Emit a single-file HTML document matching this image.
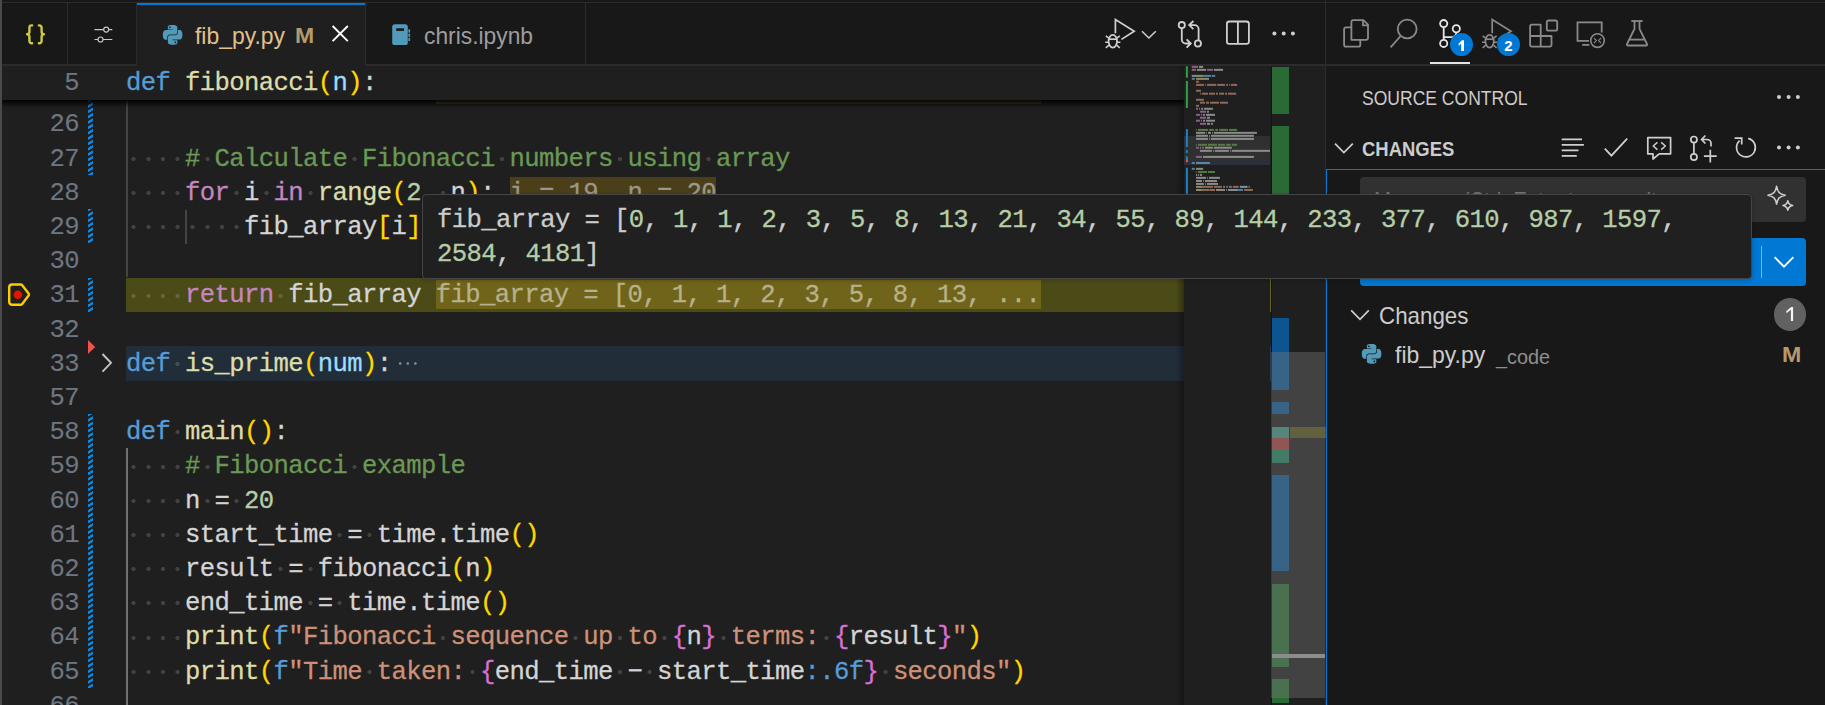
<!DOCTYPE html>
<html><head><meta charset="utf-8"><title>fib_py.py</title>
<style>
*{box-sizing:border-box;margin:0;padding:0}
html,body{width:1825px;height:705px;overflow:hidden;background:#1f1f1f}
body{position:relative;font-family:"Liberation Sans",sans-serif;color:#ccc}
.a{position:absolute}
.mono{font-family:"Liberation Mono",monospace;font-size:25.6px;white-space:pre;letter-spacing:-0.613px;-webkit-text-stroke:0.28px}
.ln{position:absolute;left:0;height:34.2px;line-height:34.2px;white-space:pre}
.num{position:absolute;top:2.0px;left:30px;width:49px;text-align:right;color:#6e7681;-webkit-text-stroke:0.1px}
.code{position:absolute;top:2.0px;left:126px}
i.w{font-style:normal;display:inline-block;position:relative;top:0px;width:14.75px;height:10px;vertical-align:middle;background:radial-gradient(circle at 50% 50%,rgba(227,228,226,.175) 0,rgba(227,228,226,.175) 1.7px,rgba(227,228,226,0) 2.5px)}
.ui{position:absolute;white-space:pre;transform-origin:0 50%}
svg{position:absolute;overflow:visible}
</style></head><body>

<div class="a" style="left:126px;top:278.0px;width:1058px;height:34.2px;background:#4b4b18"></div>
<div class="a" style="left:126px;top:346.0px;width:1058px;height:34.6px;background:#222d3a"></div>
<div class="a" style="left:126px;top:100px;width:1.9px;height:177.4px;background:#444"></div>
<div class="a" style="left:185px;top:209.8px;width:1.9px;height:34.2px;background:#444"></div>
<div class="a" style="left:126px;top:448.4px;width:1.9px;height:256.6px;background:#707070"></div>
<div class="ln mono" style="top:106.4px"><span class="num">26</span><span class="code"></span></div>
<div class="ln mono" style="top:140.6px"><span class="num">27</span><span class="code"><i class="w"> </i><i class="w"> </i><i class="w"> </i><i class="w"> </i><span style="color:#6a9955">#</span><i class="w"> </i><span style="color:#6a9955">Calculate</span><i class="w"> </i><span style="color:#6a9955">Fibonacci</span><i class="w"> </i><span style="color:#6a9955">numbers</span><i class="w"> </i><span style="color:#6a9955">using</span><i class="w"> </i><span style="color:#6a9955">array</span></span></div>
<div class="ln mono" style="top:174.8px"><span class="num">28</span><span class="code"><i class="w"> </i><i class="w"> </i><i class="w"> </i><i class="w"> </i><span style="color:#c586c0">for</span><i class="w"> </i><span style="color:#d4d4d4">i</span><i class="w"> </i><span style="color:#c586c0">in</span><i class="w"> </i><span style="color:#dcdcaa">range</span><span style="color:#ffd700">(</span><span style="color:#b5cea8">2</span><span style="color:#d4d4d4">,</span><i class="w"> </i><span style="color:#d4d4d4">n</span><span style="color:#ffd700">)</span><span style="color:#d4d4d4">:</span></span></div>
<div class="ln mono" style="top:209.0px"><span class="num">29</span><span class="code"><i class="w"> </i><i class="w"> </i><i class="w"> </i><i class="w"> </i><i class="w"> </i><i class="w"> </i><i class="w"> </i><i class="w"> </i><span style="color:#d4d4d4">fib_array</span><span style="color:#ffd700">[</span><span style="color:#d4d4d4">i</span><span style="color:#ffd700">]</span></span></div>
<div class="ln mono" style="top:243.2px"><span class="num">30</span><span class="code"></span></div>
<div class="ln mono" style="top:277.4px"><span class="num">31</span><span class="code"><i class="w"> </i><i class="w"> </i><i class="w"> </i><i class="w"> </i><span style="color:#c586c0">return</span><i class="w"> </i><span style="color:#d4d4d4">fib_array</span></span></div>
<div class="ln mono" style="top:311.6px"><span class="num">32</span><span class="code"></span></div>
<div class="ln mono" style="top:345.8px"><span class="num">33</span><span class="code"><span style="color:#569cd6">def</span><i class="w"> </i><span style="color:#dcdcaa">is_prime</span><span style="color:#ffd700">(</span><span style="color:#9cdcfe">num</span><span style="color:#ffd700">)</span><span style="color:#d4d4d4">:</span></span></div>
<div class="ln mono" style="top:380.0px"><span class="num">57</span><span class="code"></span></div>
<div class="ln mono" style="top:414.2px"><span class="num">58</span><span class="code"><span style="color:#569cd6">def</span><i class="w"> </i><span style="color:#dcdcaa">main</span><span style="color:#ffd700">()</span><span style="color:#d4d4d4">:</span></span></div>
<div class="ln mono" style="top:448.4px"><span class="num">59</span><span class="code"><i class="w"> </i><i class="w"> </i><i class="w"> </i><i class="w"> </i><span style="color:#6a9955">#</span><i class="w"> </i><span style="color:#6a9955">Fibonacci</span><i class="w"> </i><span style="color:#6a9955">example</span></span></div>
<div class="ln mono" style="top:482.6px"><span class="num">60</span><span class="code"><i class="w"> </i><i class="w"> </i><i class="w"> </i><i class="w"> </i><span style="color:#d4d4d4">n</span><i class="w"> </i><span style="color:#d4d4d4">=</span><i class="w"> </i><span style="color:#b5cea8">20</span></span></div>
<div class="ln mono" style="top:516.8px"><span class="num">61</span><span class="code"><i class="w"> </i><i class="w"> </i><i class="w"> </i><i class="w"> </i><span style="color:#d4d4d4">start_time</span><i class="w"> </i><span style="color:#d4d4d4">=</span><i class="w"> </i><span style="color:#d4d4d4">time.time</span><span style="color:#ffd700">()</span></span></div>
<div class="ln mono" style="top:551.0px"><span class="num">62</span><span class="code"><i class="w"> </i><i class="w"> </i><i class="w"> </i><i class="w"> </i><span style="color:#d4d4d4">result</span><i class="w"> </i><span style="color:#d4d4d4">=</span><i class="w"> </i><span style="color:#d4d4d4">fibonacci</span><span style="color:#ffd700">(</span><span style="color:#d4d4d4">n</span><span style="color:#ffd700">)</span></span></div>
<div class="ln mono" style="top:585.2px"><span class="num">63</span><span class="code"><i class="w"> </i><i class="w"> </i><i class="w"> </i><i class="w"> </i><span style="color:#d4d4d4">end_time</span><i class="w"> </i><span style="color:#d4d4d4">=</span><i class="w"> </i><span style="color:#d4d4d4">time.time</span><span style="color:#ffd700">()</span></span></div>
<div class="ln mono" style="top:619.4px"><span class="num">64</span><span class="code"><i class="w"> </i><i class="w"> </i><i class="w"> </i><i class="w"> </i><span style="color:#dcdcaa">print</span><span style="color:#ffd700">(</span><span style="color:#569cd6">f</span><span style="color:#ce9178">"Fibonacci</span><i class="w"> </i><span style="color:#ce9178">sequence</span><i class="w"> </i><span style="color:#ce9178">up</span><i class="w"> </i><span style="color:#ce9178">to</span><i class="w"> </i><span style="color:#da70d6">{</span><span style="color:#d4d4d4">n</span><span style="color:#da70d6">}</span><i class="w"> </i><span style="color:#ce9178">terms:</span><i class="w"> </i><span style="color:#da70d6">{</span><span style="color:#d4d4d4">result</span><span style="color:#da70d6">}</span><span style="color:#ce9178">"</span><span style="color:#ffd700">)</span></span></div>
<div class="ln mono" style="top:653.6px"><span class="num">65</span><span class="code"><i class="w"> </i><i class="w"> </i><i class="w"> </i><i class="w"> </i><span style="color:#dcdcaa">print</span><span style="color:#ffd700">(</span><span style="color:#569cd6">f</span><span style="color:#ce9178">"Time</span><i class="w"> </i><span style="color:#ce9178">taken:</span><i class="w"> </i><span style="color:#da70d6">{</span><span style="color:#d4d4d4">end_time</span><i class="w"> </i><span style="color:#d4d4d4">−</span><i class="w"> </i><span style="color:#d4d4d4">start_time</span><span style="color:#569cd6">:.6f</span><span style="color:#da70d6">}</span><i class="w"> </i><span style="color:#ce9178">seconds"</span><span style="color:#ffd700">)</span></span></div>
<div class="ln mono" style="top:687.8px"><span class="num">66</span><span class="code"></span></div>
<div class="a" style="left:509.50px;top:177.2px;width:206.50px;height:29.4px;background:#4b3f1a"></div>
<div class="ln mono" style="top:174.8px"><span class="code" style="left:509.50px;color:#9c9788">i = 19, n = 20</span></div>
<div class="a" style="left:435.75px;top:279.8px;width:604.75px;height:29.4px;background:#6f6419"></div>
<div class="ln mono" style="top:277.4px"><span class="code" style="left:435.75px;color:#b7b18c">fib_array = [0, 1, 1, 2, 3, 5, 8, 13, ...</span></div>
<svg style="left:0;top:0" width="1825" height="705" viewBox="0 0 1825 705"><g fill="#8d949e"><circle cx="400.2" cy="363.6" r="1.25"/><circle cx="407.8" cy="363.6" r="1.25"/><circle cx="415.4" cy="363.6" r="1.25"/></g></svg>
<div class="a" style="left:88px;top:100.0px;width:5px;height:74.8px;background:repeating-linear-gradient(150deg,#0f86de 0,#0f86de 1.9px,rgba(15,134,222,0) 2.5px,rgba(15,134,222,0) 4.1px,#0f86de 4.63px)"></div>
<div class="a" style="left:88px;top:209.0px;width:5px;height:34.2px;background:repeating-linear-gradient(150deg,#0f86de 0,#0f86de 1.9px,rgba(15,134,222,0) 2.5px,rgba(15,134,222,0) 4.1px,#0f86de 4.63px)"></div>
<div class="a" style="left:88px;top:277.8px;width:5px;height:34.2px;background:repeating-linear-gradient(150deg,#0f86de 0,#0f86de 1.9px,rgba(15,134,222,0) 2.5px,rgba(15,134,222,0) 4.1px,#0f86de 4.63px)"></div>
<div class="a" style="left:88px;top:414.2px;width:5px;height:273.6px;background:repeating-linear-gradient(150deg,#0f86de 0,#0f86de 1.9px,rgba(15,134,222,0) 2.5px,rgba(15,134,222,0) 4.1px,#0f86de 4.63px)"></div>
<svg style="left:88px;top:340px" width="8" height="14" viewBox="0 0 8 14"><path d="M0 0 L7.2 7 L0 14 Z" fill="#f0524f"/></svg>
<svg style="left:98px;top:349px" width="18" height="28" viewBox="0 0 18 28"><path d="M4.5 5 L13 13.8 L4.5 22.6" fill="none" stroke="#c5c5c5" stroke-width="1.9"/></svg>
<svg style="left:5px;top:280px" width="30" height="30" viewBox="0 0 30 30"><path d="M7 4.500 H15.6 Q16.600 4.500 17.2 5.300 L23.6 13.6 Q24.4 14.6 23.6 15.6 L17.2 23.900 Q16.600 24.700 15.6 24.700 H7 A2.800 2.800 0 0 1 4.200 21.900 V7.300 A2.800 2.800 0 0 1 7 4.500 Z" fill="none" stroke="#ffcc00" stroke-width="2.4" stroke-linejoin="round"/><circle cx="12.9" cy="14.7" r="4.3" fill="#e51400"/></svg>
<div class="a" style="left:436px;top:100px;width:605px;height:4px;background:#4b3f1a"></div>
<div class="a" style="left:2px;top:66px;width:1182px;height:34px;background:#1f1f1f;box-shadow:0 3px 5px 1px rgba(0,0,0,.9)"></div>
<div class="a" style="left:2px;top:66px;width:1182px;height:34px;background:#1f1f1f"></div>
<div class="ln mono" style="top:65.4px"><span class="num">5</span><span class="code"><span style="color:#569cd6">def</span><span style="color:#d4d4d4"> </span><span style="color:#dcdcaa">fibonacci</span><span style="color:#ffd700">(</span><span style="color:#9cdcfe">n</span><span style="color:#ffd700">)</span><span style="color:#d4d4d4">:</span></span></div>
<div class="a" style="left:0;top:0;width:1326px;height:66px;background:#181818"></div>
<div class="a" style="left:1326px;top:0;width:499px;height:705px;background:#181818"></div>
<div class="a" style="left:0;top:2px;width:1825px;height:1px;background:#2b2b2b"></div>
<div class="a" style="left:0;top:64.3px;width:1825px;height:1.7px;background:#2b2b2b"></div>
<div class="a" style="left:137.2px;top:3px;width:227.6px;height:63px;background:#1f1f1f;border-top:2px solid #0078d4"></div>
<div class="a" style="left:66.8px;top:3px;width:1.5px;height:62px;background:#2b2b2b"></div>
<div class="a" style="left:135.7px;top:3px;width:1.5px;height:62px;background:#2b2b2b"></div>
<div class="a" style="left:364.8px;top:3px;width:1.5px;height:62px;background:#2b2b2b"></div>
<div class="a" style="left:584.8px;top:3px;width:1.5px;height:62px;background:#2b2b2b"></div>
<div class="a" style="left:1324.6px;top:0;width:1.7px;height:705px;background:#2b2b2b"></div>
<div class="a" style="left:0;top:0;width:2px;height:705px;background:#4a4a4a"></div>
<svg style="left:0;top:0" width="1825" height="705" viewBox="0 0 1825 705"><g fill="none" stroke="#cbcb41" stroke-width="2.4" stroke-linecap="round" stroke-linejoin="round"><path d="M32.1 25.4h-.5a2.2 2.2 0 0 0-2.2 2.2v4.2a2.5 2.5 0 0 1-2.3 2.5a2.5 2.5 0 0 1 2.3 2.5v4.2a2.2 2.2 0 0 0 2.2 2.2h.5"/><path d="M38.9 25.4h.5a2.2 2.2 0 0 1 2.2 2.2v4.2a2.5 2.5 0 0 0 2.3 2.5a2.5 2.5 0 0 0-2.3 2.5v4.2a2.2 2.2 0 0 1-2.2 2.2h-.5"/></g></svg>
<svg style="left:0;top:0" width="1825" height="705" viewBox="0 0 1825 705"><g fill="#181818" stroke="#c8c8c8" stroke-width="1.2"><path d="M94.5 29.6H112.3M94.5 39.5H112.3"/><circle cx="106.2" cy="29.6" r="2.5"/><circle cx="100.5" cy="39.5" r="2.5"/></g></svg>
<svg style="left:162.7px;top:24.5px" width="19.2" height="19.7" viewBox="0.2 0.1 23.6 23.8" preserveAspectRatio="none"><path d="M14.25.18l.9.2.73.26.59.3.45.32.34.34.25.34.16.33.1.3.04.26.02.2-.01.13V8.5l-.05.63-.13.55-.21.46-.26.38-.3.31-.33.25-.35.19-.35.14-.33.1-.3.07-.26.04-.21.02H8.77l-.69.05-.59.14-.5.22-.41.27-.33.32-.27.35-.2.36-.15.37-.1.35-.07.32-.04.27-.02.21v3.06H3.17l-.21-.03-.28-.07-.32-.12-.35-.18-.36-.26-.36-.36-.35-.46-.32-.59-.28-.73-.21-.88-.14-1.05-.05-1.23.06-1.22.16-1.04.24-.87.32-.71.36-.57.4-.44.42-.33.42-.24.4-.16.36-.1.32-.05.24-.01h.16l.06.01h8.16v-.83H6.18l-.01-2.75-.02-.37.05-.34.11-.31.17-.28.25-.26.31-.23.38-.2.44-.18.51-.15.58-.12.64-.1.71-.06.77-.04.84-.02 1.27.05zm-6.3 1.98l-.23.33-.08.41.08.41.23.34.33.22.41.09.41-.09.33-.22.23-.34.08-.41-.08-.41-.23-.33-.33-.22-.41-.09-.41.09zm13.09 3.95l.28.06.32.12.35.18.36.27.36.35.35.47.32.59.28.73.21.88.14 1.04.05 1.23-.06 1.23-.16 1.04-.24.86-.32.71-.36.57-.4.45-.42.33-.42.24-.4.16-.36.09-.32.05-.24.02-.16-.01h-8.22v.82h5.84l.01 2.76.02.36-.05.34-.11.31-.17.29-.25.25-.31.24-.38.2-.44.17-.51.15-.58.13-.64.09-.71.07-.77.04-.84.01-1.27-.04-1.07-.14-.9-.2-.73-.25-.59-.3-.45-.33-.34-.34-.25-.34-.16-.33-.1-.3-.04-.25-.02-.2.01-.13v-5.34l.05-.64.13-.54.21-.46.26-.38.3-.32.33-.24.35-.2.35-.14.33-.1.3-.06.26-.04.21-.02.13-.01h5.84l.69-.05.59-.14.5-.21.41-.28.33-.32.27-.35.2-.36.15-.36.1-.35.07-.32.04-.28.02-.21V6.07h2.09l.14.01zm-6.47 14.25l-.23.33-.08.41.08.41.23.33.33.23.41.08.41-.08.33-.23.23-.33.08-.41-.08-.41-.23-.33-.33-.23-.41-.08-.41.08z" fill="#519aba"/></svg>
<div class="ui" style="left:195px;top:21.5px;font-size:23.4px;line-height:28px;color:#e2c08d;transform:scaleX(.98)">fib_py.py</div>
<div class="ui" style="left:294.9px;top:22.4px;font-size:22.6px;line-height:28px;color:#b39a71;font-weight:bold;transform:scaleX(1.02)">M</div>
<svg style="left:0;top:0" width="1825" height="705" viewBox="0 0 1825 705"><path d="M332.6 26 L347.8 41.2 M347.8 26 L332.6 41.2" stroke="#fff" stroke-width="1.9" fill="none"/></svg>
<svg style="left:0;top:0" width="1825" height="705" viewBox="0 0 1825 705"><rect x="392.2" y="24.2" width="15.6" height="20.8" rx="2.6" fill="#519aba"/><rect x="396.2" y="28.3" width="7.9" height="2.6" fill="#181818"/><rect x="408.4" y="29.4" width="1.7" height="3.2" fill="#519aba"/><rect x="408.4" y="33.6" width="1.7" height="3.2" fill="#519aba"/><rect x="408.4" y="37.8" width="1.7" height="3.2" fill="#519aba"/></svg>
<div class="ui" style="left:423.6px;top:21.5px;font-size:23.4px;line-height:28px;color:#9d9d9d;transform:scaleX(.975)">chris.ipynb</div>
<svg style="left:0;top:0" width="1825" height="705" viewBox="0 0 1825 705"><g transform="translate(0 0)" fill="none" stroke="#d0d0d0" stroke-width="1.7" stroke-linejoin="miter"><path d="M1115.4 33.2V19.6L1134.2 31.2L1121.4 39.4"/><ellipse cx="1112.8" cy="41.2" rx="4.2" ry="6.4"/><path d="M1108.6 39.2H1117" /><path d="M1105.8 35.800L1108.8 38.2M1119.800 35.800L1116.800 38.2M1105.2 42.2H1108.4M1117.2 42.2H1120.4M1105.8 47.800L1109 45.2M1119.800 47.800L1116.600 45.2" stroke-width="1.5"/></g><path d="M1142 31.2L1148.9 38L1155.8 31.2" fill="none" stroke="#d0d0d0" stroke-width="1.5"/><g fill="none" stroke="#d0d0d0" stroke-width="1.8"><circle cx="1181.8" cy="25.1" r="3.1"/><circle cx="1197.9" cy="43.5" r="3.1"/><path d="M1181.8 28.3V39.5a4 4 0 0 0 4 4H1190.4M1186.6 39.4L1190.8 43.5L1186.6 47.6"/><path d="M1198.6 40.3V29.1a4 4 0 0 0-4-4H1189.6M1193.4 21L1189.2 25.1L1193.4 29.2"/></g><g fill="none" stroke="#d0d0d0" stroke-width="1.8"><rect x="1226.9" y="21.5" width="22" height="22.4" rx="2.4"/><path d="M1237.9 21.5V43.9"/></g><g fill="#d0d0d0"><circle cx="1274.4" cy="33.6" r="2"/><circle cx="1283.7" cy="33.6" r="2"/><circle cx="1292.9" cy="33.6" r="2"/></g></svg>
<svg style="left:0;top:0" width="1825" height="705" viewBox="0 0 1825 705"><g fill="none" stroke="#8a8a8a" stroke-width="1.8" stroke-linejoin="round"><path d="M1351.4 39.8V22.1a2 2 0 0 1 2-2H1363.4L1368 24.7V37.8a2 2 0 0 1-2 2Z"/><path d="M1363 20.4V25.4H1367.8"/><path d="M1351.2 27.4H1346.1a2 2 0 0 0-2 2V44.7a2 2 0 0 0 2 2H1358.3a2 2 0 0 0 2-2V40"/></g><g fill="none" stroke="#8a8a8a" stroke-width="1.8"><circle cx="1407.2" cy="29" r="9.4"/><path d="M1400.6 36L1390.6 47.4"/></g><g fill="none" stroke="#e6e6e6" stroke-width="1.8"><circle cx="1443.7" cy="23.6" r="3.6"/><circle cx="1443.7" cy="43.4" r="3.6"/><circle cx="1456.3" cy="28.8" r="3.6"/><path d="M1443.7 27.2V39.8M1456.3 32.4c0 3.6-2.600 4.800-6 4.800H1443.7"/></g><g transform="translate(376.8 0)" fill="none" stroke="#8a8a8a" stroke-width="1.7" stroke-linejoin="miter"><path d="M1115.4 33.2V19.6L1134.2 31.2L1121.4 39.4"/><ellipse cx="1112.8" cy="41.2" rx="4.2" ry="6.4"/><path d="M1108.6 39.2H1117" /><path d="M1105.8 35.800L1108.8 38.2M1119.800 35.800L1116.800 38.2M1105.2 42.2H1108.4M1117.2 42.2H1120.4M1105.8 47.800L1109 45.2M1119.800 47.800L1116.600 45.2" stroke-width="1.5"/></g><g fill="none" stroke="#8a8a8a" stroke-width="1.8" stroke-linejoin="round"><path d="M1530.1 26.5a1.8 1.8 0 0 1 1.8-1.8H1540.7V36H1551.5V44.8a1.8 1.8 0 0 1-1.8 1.8H1531.9a1.8 1.8 0 0 1-1.8-1.8Z"/><path d="M1540.7 36V46.6M1530.1 36H1540.7"/><rect x="1546.8" y="20.5" width="10.4" height="10.2" rx="1.8"/></g><g fill="none" stroke="#8a8a8a" stroke-width="1.8"><path d="M1589 40.9H1577.5V22.4H1601.7V32.6"/><path d="M1582.3 44.9H1589.4"/><circle cx="1597.5" cy="40.6" r="6.8" stroke-width="1.6"/><path d="M1594 38.2L1596.4 40.6L1594 43M1601 38.2L1598.6 40.6L1601 43" stroke-width="1.1"/></g><g fill="none" stroke="#8a8a8a" stroke-width="1.8" stroke-linejoin="round"><path d="M1631.3 21H1642.7"/><path d="M1634.5 21V28.8L1627 44a1 1 0 0 0 .9 1.5H1646.1a1 1 0 0 0 .9-1.5L1639.5 28.8V21"/><path d="M1629.6 39.6H1644.4"/></g></svg>
<div class="a" style="left:1449.8px;top:33.1px;width:23px;height:23px;border-radius:50%;background:#0078d4"></div>
<svg style="left:0;top:0" width="1825" height="705" viewBox="0 0 1825 705"><path d="M1458.7 43.6L1461.8999999999999 40.2H1464.0V50.9H1461.2V43.5L1458.7 46.0Z" fill="#fff"/></svg>
<div class="a" style="left:1496.9px;top:33.3px;width:23px;height:23px;border-radius:50%;background:#0078d4"></div>
<div class="ui" style="left:1496.9px;top:34.4px;width:23px;text-align:center;font-size:15px;line-height:23px;font-weight:bold;color:#fff">2</div>
<div class="a" style="left:1430px;top:62.4px;width:40px;height:1.6px;background:#e4e4e4"></div>
<div class="a" style="left:1176px;top:100px;width:8px;height:605px;background:linear-gradient(90deg,rgba(0,0,0,0),rgba(0,0,0,.35))"></div>
<div class="a" style="left:1176px;top:66px;width:8px;height:34px;background:linear-gradient(90deg,rgba(0,0,0,0),rgba(0,0,0,.2))"></div>
<div class="a" style="left:1184px;top:66px;width:87px;height:639px;background:#1f1f1f"></div>
<div class="a" style="left:1184px;top:136px;width:86px;height:29.4px;background:rgba(121,121,121,.2)"></div>
<svg style="left:0;top:0" width="1825" height="705" viewBox="0 0 1825 705"><rect x="1184" y="161.6" width="86" height="3" fill="#263243"/><rect x="1191.74" y="65.89" width="6.26" height="2" fill="#8a5f88"/><rect x="1198.98" y="65.89" width="4.11" height="2" fill="#8b8b8b"/><rect x="1191.74" y="68.83" width="4.31" height="2" fill="#8a5f88"/><rect x="1197.03" y="68.83" width="9.00" height="2" fill="#8b8b8b"/><rect x="1207.01" y="68.83" width="5.87" height="2" fill="#8a5f88"/><rect x="1213.86" y="68.83" width="9.20" height="2" fill="#8b8b8b"/><rect x="1191.74" y="74.89" width="11.35" height="2" fill="#8d8d6e"/><rect x="1203.09" y="74.89" width="8.22" height="2" fill="#4f7fa6"/><rect x="1211.90" y="74.89" width="3.33" height="2" fill="#4f7fa6"/><rect x="1191.74" y="77.83" width="3.13" height="2" fill="#4f7fa6"/><rect x="1196.05" y="77.83" width="12.92" height="2" fill="#8d8d6e"/><rect x="1196.05" y="80.77" width="2.94" height="2" fill="#8f6a57"/><rect x="1196.05" y="83.90" width="7.83" height="2" fill="#8f6a57"/><rect x="1204.85" y="83.90" width="0.78" height="2" fill="#8f6a57"/><rect x="1207.01" y="83.90" width="9.20" height="2" fill="#8f6a57"/><rect x="1217.18" y="83.90" width="7.83" height="2" fill="#8f6a57"/><rect x="1226.18" y="83.90" width="1.76" height="2" fill="#8f6a57"/><rect x="1229.12" y="83.90" width="0.78" height="2" fill="#8f6a57"/><rect x="1230.88" y="83.90" width="6.26" height="2" fill="#8f6a57"/><rect x="1196.05" y="89.77" width="4.89" height="2" fill="#8f6a57"/><rect x="1199.96" y="92.70" width="0.78" height="2" fill="#8f6a57"/><rect x="1201.92" y="92.70" width="6.07" height="2" fill="#8f6a57"/><rect x="1208.96" y="92.70" width="6.07" height="2" fill="#8f6a57"/><rect x="1216.01" y="92.70" width="1.96" height="2" fill="#8f6a57"/><rect x="1219.14" y="92.70" width="4.89" height="2" fill="#8f6a57"/><rect x="1225.01" y="92.70" width="1.96" height="2" fill="#8f6a57"/><rect x="1227.95" y="92.70" width="8.22" height="2" fill="#8f6a57"/><rect x="1196.05" y="98.77" width="7.83" height="2" fill="#8f6a57"/><rect x="1199.96" y="101.70" width="5.09" height="2" fill="#8f6a57"/><rect x="1206.03" y="101.70" width="2.94" height="2" fill="#8f6a57"/><rect x="1209.94" y="101.70" width="9.00" height="2" fill="#8f6a57"/><rect x="1219.92" y="101.70" width="8.02" height="2" fill="#8f6a57"/><rect x="1196.05" y="104.84" width="2.94" height="2" fill="#8f6a57"/><rect x="1196.05" y="107.77" width="1.96" height="2" fill="#8a5f88"/><rect x="1198.98" y="107.77" width="0.78" height="2" fill="#8b8b8b"/><rect x="1201.14" y="107.77" width="1.96" height="2" fill="#8b8b8b"/><rect x="1204.07" y="107.77" width="8.81" height="2" fill="#8b8b8b"/><rect x="1199.96" y="110.71" width="6.07" height="2" fill="#8a5f88"/><rect x="1207.01" y="110.71" width="1.96" height="2" fill="#8b8b8b"/><rect x="1196.05" y="113.84" width="3.91" height="2" fill="#8a5f88"/><rect x="1200.94" y="113.84" width="0.78" height="2" fill="#8b8b8b"/><rect x="1203.09" y="113.84" width="1.96" height="2" fill="#8b8b8b"/><rect x="1206.03" y="113.84" width="9.00" height="2" fill="#8b8b8b"/><rect x="1199.96" y="116.77" width="6.07" height="2" fill="#8a5f88"/><rect x="1207.01" y="116.77" width="2.94" height="2" fill="#8b8b8b"/><rect x="1196.05" y="119.71" width="3.91" height="2" fill="#8a5f88"/><rect x="1200.94" y="119.71" width="0.78" height="2" fill="#8b8b8b"/><rect x="1203.09" y="119.71" width="1.96" height="2" fill="#8b8b8b"/><rect x="1206.03" y="119.71" width="9.00" height="2" fill="#8b8b8b"/><rect x="1199.96" y="122.84" width="6.07" height="2" fill="#8a5f88"/><rect x="1207.01" y="122.84" width="2.94" height="2" fill="#8b8b8b"/><rect x="1210.92" y="122.84" width="1.96" height="2" fill="#8b8b8b"/><rect x="1195.85" y="128.91" width="0.78" height="2" fill="#57794a"/><rect x="1198.00" y="128.91" width="9.98" height="2" fill="#57794a"/><rect x="1208.96" y="128.91" width="4.89" height="2" fill="#57794a"/><rect x="1215.23" y="128.91" width="2.74" height="2" fill="#57794a"/><rect x="1219.14" y="128.91" width="8.81" height="2" fill="#57794a"/><rect x="1228.92" y="128.91" width="8.22" height="2" fill="#57794a"/><rect x="1196.05" y="131.84" width="9.00" height="2" fill="#8b8b8b"/><rect x="1205.83" y="131.84" width="0.78" height="2" fill="#8b8b8b"/><rect x="1207.98" y="131.84" width="2.94" height="2" fill="#8b8b8b"/><rect x="1212.09" y="131.84" width="0.78" height="2" fill="#8b8b8b"/><rect x="1213.86" y="131.84" width="43.05" height="2" fill="#8b8b8b"/><rect x="1196.05" y="134.78" width="11.94" height="2" fill="#8b8b8b"/><rect x="1209.16" y="134.78" width="0.78" height="2" fill="#8b8b8b"/><rect x="1210.92" y="134.78" width="43.05" height="2" fill="#8b8b8b"/><rect x="1196.05" y="137.91" width="11.94" height="2" fill="#8b8b8b"/><rect x="1209.16" y="137.91" width="0.78" height="2" fill="#8b8b8b"/><rect x="1210.92" y="137.91" width="43.05" height="2" fill="#8b8b8b"/><rect x="1195.85" y="143.78" width="0.78" height="2" fill="#57794a"/><rect x="1198.00" y="143.78" width="9.00" height="2" fill="#57794a"/><rect x="1207.98" y="143.78" width="9.00" height="2" fill="#57794a"/><rect x="1217.96" y="143.78" width="7.05" height="2" fill="#57794a"/><rect x="1225.99" y="143.78" width="4.89" height="2" fill="#57794a"/><rect x="1231.86" y="143.78" width="5.28" height="2" fill="#57794a"/><rect x="1196.05" y="146.71" width="2.94" height="2" fill="#8a5f88"/><rect x="1199.96" y="146.71" width="0.78" height="2" fill="#8b8b8b"/><rect x="1202.11" y="146.71" width="1.76" height="2" fill="#8a5f88"/><rect x="1205.05" y="146.71" width="7.83" height="2" fill="#8d8d6e"/><rect x="1213.86" y="146.71" width="18.00" height="2" fill="#8b8b8b"/><rect x="1199.96" y="149.85" width="11.94" height="2" fill="#8b8b8b"/><rect x="1213.07" y="149.85" width="0.78" height="2" fill="#8b8b8b"/><rect x="1214.83" y="149.85" width="14.09" height="2" fill="#8b8b8b"/><rect x="1230.10" y="149.85" width="0.78" height="2" fill="#8b8b8b"/><rect x="1231.86" y="149.85" width="38.16" height="2" fill="#8b8b8b"/><rect x="1196.05" y="155.91" width="5.87" height="2" fill="#8a5f88"/><rect x="1203.09" y="155.91" width="50.88" height="2" fill="#8b8b8b"/><rect x="1191.74" y="161.98" width="3.13" height="2" fill="#4f7fa6"/><rect x="1196.05" y="161.98" width="13.89" height="2" fill="#5d88a8"/><rect x="1191.74" y="167.85" width="3.13" height="2" fill="#4f7fa6"/><rect x="1196.05" y="167.85" width="7.05" height="2" fill="#8d8d6e"/><rect x="1195.85" y="170.98" width="0.78" height="2" fill="#57794a"/><rect x="1198.00" y="170.98" width="9.00" height="2" fill="#57794a"/><rect x="1207.98" y="170.98" width="7.05" height="2" fill="#57794a"/><rect x="1196.05" y="173.92" width="0.98" height="2" fill="#8b8b8b"/><rect x="1198.00" y="173.92" width="0.98" height="2" fill="#8b8b8b"/><rect x="1199.96" y="173.92" width="1.96" height="2" fill="#8b8b8b"/><rect x="1196.05" y="176.85" width="9.98" height="2" fill="#8b8b8b"/><rect x="1207.20" y="176.85" width="0.78" height="2" fill="#8b8b8b"/><rect x="1208.96" y="176.85" width="10.96" height="2" fill="#8b8b8b"/><rect x="1196.05" y="179.98" width="5.87" height="2" fill="#8b8b8b"/><rect x="1203.29" y="179.98" width="0.78" height="2" fill="#8b8b8b"/><rect x="1205.05" y="179.98" width="11.94" height="2" fill="#8b8b8b"/><rect x="1196.05" y="182.92" width="7.83" height="2" fill="#8b8b8b"/><rect x="1205.24" y="182.92" width="0.78" height="2" fill="#8b8b8b"/><rect x="1207.01" y="182.92" width="10.96" height="2" fill="#8b8b8b"/><rect x="1196.05" y="185.85" width="5.87" height="2" fill="#8d8d6e"/><rect x="1201.92" y="185.85" width="10.96" height="2" fill="#8f6a57"/><rect x="1213.86" y="185.85" width="8.02" height="2" fill="#8f6a57"/><rect x="1223.05" y="185.85" width="1.96" height="2" fill="#8f6a57"/><rect x="1226.18" y="185.85" width="1.76" height="2" fill="#8f6a57"/><rect x="1228.92" y="185.85" width="2.94" height="2" fill="#4f7fa6"/><rect x="1232.84" y="185.85" width="5.87" height="2" fill="#8f6a57"/><rect x="1239.88" y="185.85" width="7.63" height="2" fill="#7f93a3"/><rect x="1248.49" y="185.85" width="1.37" height="2" fill="#8f6a57"/><rect x="1196.05" y="188.98" width="5.87" height="2" fill="#8d8d6e"/><rect x="1201.92" y="188.98" width="7.05" height="2" fill="#8f6a57"/><rect x="1209.35" y="188.98" width="5.68" height="2" fill="#8f6a57"/><rect x="1216.01" y="188.98" width="9.00" height="2" fill="#8b8b8b"/><rect x="1225.99" y="188.98" width="0.78" height="2" fill="#8b8b8b"/><rect x="1227.95" y="188.98" width="9.98" height="2" fill="#8b8b8b"/><rect x="1237.93" y="188.98" width="5.09" height="2" fill="#4f7fa6"/><rect x="1244.19" y="188.98" width="8.61" height="2" fill="#8f6a57"/><rect x="1185.9" y="66.31" width="2" height="11.35" fill="#2ea043"/><rect x="1185.9" y="80.98" width="2" height="27.01" fill="#2ea043"/><rect x="1185.9" y="129.12" width="2" height="18.00" fill="#1b81c8"/><rect x="1185.9" y="150.06" width="2" height="2.94" fill="#1b81c8"/><rect x="1185.9" y="156.32" width="2" height="2.94" fill="#1b81c8"/><rect x="1185.9" y="159.26" width="2" height="2.94" fill="#e05a4f"/><rect x="1185.9" y="167.68" width="2" height="27.40" fill="#1b81c8"/></svg>
<div class="a" style="left:1271px;top:66px;width:1px;height:639px;background:#131313"></div>
<div class="a" style="left:1272px;top:66.6px;width:17.4px;height:47.2px;background:#2a6b35"></div>
<div class="a" style="left:1272px;top:126px;width:17.4px;height:74.0px;background:#2a6b35"></div>
<div class="a" style="left:1272px;top:318px;width:17.4px;height:72.0px;background:#0d5590"></div>
<div class="a" style="left:1272px;top:402px;width:17.4px;height:12.0px;background:#0d5590"></div>
<div class="a" style="left:1272px;top:426.6px;width:17.4px;height:11.8px;background:#3c8f82"></div>
<div class="a" style="left:1272px;top:438.4px;width:17.4px;height:11.9px;background:#a0403c"></div>
<div class="a" style="left:1272px;top:450.3px;width:17.4px;height:13.1px;background:#1f7d5a"></div>
<div class="a" style="left:1272px;top:475px;width:17.4px;height:96.4px;background:#0d5590"></div>
<div class="a" style="left:1272px;top:583.9px;width:17.4px;height:83.6px;background:#2a6b35"></div>
<div class="a" style="left:1272px;top:679.3px;width:17.4px;height:24.2px;background:#2a6b35"></div>
<div class="a" style="left:1290px;top:426.6px;width:36px;height:11.8px;background:#55511c"></div>
<div class="a" style="left:1270px;top:278px;width:1px;height:33.5px;background:#6a641c"></div>
<div class="a" style="left:1270px;top:346px;width:1px;height:34.6px;background:#2b3a4f"></div>
<div class="a" style="left:1271px;top:352px;width:54px;height:345.7px;background:rgba(121,121,121,.4)"></div>
<div class="a" style="left:1272px;top:654.4px;width:53px;height:3.2px;background:#8c8c8c"></div>
<div class="ui" style="left:1362px;top:86px;font-size:19.8px;line-height:24px;color:#ccc;transform:scaleX(.886)">SOURCE CONTROL</div>
<div class="ui" style="left:1361.6px;top:136.6px;font-size:19.8px;line-height:24px;font-weight:bold;color:#ccc;transform:scaleX(.933)">CHANGES</div>
<svg style="left:0;top:0" width="1825" height="705" viewBox="0 0 1825 705"><g fill="#cfcfcf"><circle cx="1779" cy="97" r="2"/><circle cx="1788.6" cy="97" r="2"/><circle cx="1797.9" cy="97" r="2"/></g><path d="M1335 143.6L1343.9 152.6L1352.8 143.6" fill="none" stroke="#cfcfcf" stroke-width="1.7"/><path d="M1561.7 139.3H1582M1561.7 144.8H1583.9M1561.7 150.3H1578.5M1561.7 155.8H1576.8" fill="none" stroke="#cfcfcf" stroke-width="1.8"/><path d="M1604.8 148.6L1611.4 155.6L1627.2 138.6" fill="none" stroke="#cfcfcf" stroke-width="1.8"/><g fill="none" stroke="#cfcfcf" stroke-width="1.7" stroke-linejoin="round"><path d="M1647.8 137.6H1670.6V153.8H1659.2L1653 159V153.8H1647.8Z"/><path d="M1657.4 142.4L1653.2 146L1657.4 149.6M1661.2 142.4L1665.4 146L1661.2 149.6" stroke-width="1.5"/></g><g fill="none" stroke="#cfcfcf" stroke-width="1.7"><circle cx="1693.9" cy="139.6" r="3.1"/><circle cx="1693.9" cy="157" r="3.1"/><path d="M1693.9 142.8V153.8"/><path d="M1705.4 135.5L1701.6 139.5L1705.4 143.5M1701.8 139.5H1707a4 4 0 0 1 4 4V146.4"/><path d="M1710.3 149.8V162.6M1703.9 156.2H1716.7"/></g><g fill="none" stroke="#cfcfcf" stroke-width="1.7"><path d="M1741.7 144.6V138.1H1734.6"/><path d="M1748.2 138.4a9.4 9.4 0 1 1-8.6 2.2"/></g><g fill="#cfcfcf"><circle cx="1779" cy="147.4" r="2"/><circle cx="1788.6" cy="147.4" r="2"/><circle cx="1797.9" cy="147.4" r="2"/></g></svg>
<div class="a" style="left:1326px;top:168.8px;width:499px;height:540px;border:1.3px solid #0078d4;border-right:0"></div>
<div class="a" style="left:1360px;top:177px;width:446px;height:45px;background:#313131;border-radius:4px"></div>
<div class="ui" style="left:1373.6px;top:187.3px;font-size:23.4px;line-height:28px;color:#747474;transform:scaleX(.875)">Message (Ctrl+Enter to commit</div>
<svg style="left:0;top:0" width="1825" height="705" viewBox="0 0 1825 705"><g fill="none" stroke="#cfcfcf" stroke-width="1.6" stroke-linejoin="round"><path d="M1776.6 186.4c1 5.600 2.800 7.600 8.600 8.800c-5.800 1.200-7.600 3.200-8.600 8.800c-1-5.600-2.800-7.600-8.600-8.800c5.800-1.200 7.600-3.200 8.600-8.800Z"/><path d="M1787.8 200.800c.6 2.900 1.600 4 4.800 4.700c-3.200.7-4.200 1.800-4.800 4.700c-.6-2.900-1.600-4-4.800-4.700c3.200-.7 4.200-1.800 4.800-4.700Z"/></g></svg>
<div class="a" style="left:1360px;top:238.4px;width:446px;height:48px;background:#0078d4;border-radius:4px"></div>
<div class="a" style="left:1761px;top:246px;width:1px;height:31.500px;background:rgba(255,255,255,.45)"></div>
<svg style="left:0;top:0" width="1825" height="705" viewBox="0 0 1825 705"><path d="M1774.6 257.2L1784 266.6L1793.4 257.2" fill="none" stroke="#fff" stroke-width="1.9"/></svg>
<svg style="left:0;top:0" width="1825" height="705" viewBox="0 0 1825 705"><path d="M1351.2 310.4L1360 319.4L1368.8 310.4" fill="none" stroke="#cfcfcf" stroke-width="1.7"/></svg>
<div class="ui" style="left:1379.4px;top:301.6px;font-size:23.4px;line-height:28px;color:#ccc;transform:scaleX(.955)">Changes</div>
<div class="a" style="left:1773.8px;top:298px;width:32.6px;height:32.8px;border-radius:50%;background:#616161"></div>
<svg style="left:0;top:0" width="1825" height="705" viewBox="0 0 1825 705"><path d="M1786.4 310.9L1791.2 306.9H1793.1V321.1H1790.9V309.7L1786.4 313.3Z" fill="#f4f4f4"/></svg>
<svg style="left:1362px;top:343.6px" width="19.2" height="19.7" viewBox="0.2 0.1 23.6 23.8" preserveAspectRatio="none"><path d="M14.25.18l.9.2.73.26.59.3.45.32.34.34.25.34.16.33.1.3.04.26.02.2-.01.13V8.5l-.05.63-.13.55-.21.46-.26.38-.3.31-.33.25-.35.19-.35.14-.33.1-.3.07-.26.04-.21.02H8.77l-.69.05-.59.14-.5.22-.41.27-.33.32-.27.35-.2.36-.15.37-.1.35-.07.32-.04.27-.02.21v3.06H3.17l-.21-.03-.28-.07-.32-.12-.35-.18-.36-.26-.36-.36-.35-.46-.32-.59-.28-.73-.21-.88-.14-1.05-.05-1.23.06-1.22.16-1.04.24-.87.32-.71.36-.57.4-.44.42-.33.42-.24.4-.16.36-.1.32-.05.24-.01h.16l.06.01h8.16v-.83H6.18l-.01-2.75-.02-.37.05-.34.11-.31.17-.28.25-.26.31-.23.38-.2.44-.18.51-.15.58-.12.64-.1.71-.06.77-.04.84-.02 1.27.05zm-6.3 1.98l-.23.33-.08.41.08.41.23.34.33.22.41.09.41-.09.33-.22.23-.34.08-.41-.08-.41-.23-.33-.33-.22-.41-.09-.41.09zm13.09 3.95l.28.06.32.12.35.18.36.27.36.35.35.47.32.59.28.73.21.88.14 1.04.05 1.23-.06 1.23-.16 1.04-.24.86-.32.71-.36.57-.4.45-.42.33-.42.24-.4.16-.36.09-.32.05-.24.02-.16-.01h-8.22v.82h5.84l.01 2.76.02.36-.05.34-.11.31-.17.29-.25.25-.31.24-.38.2-.44.17-.51.15-.58.13-.64.09-.71.07-.77.04-.84.01-1.27-.04-1.07-.14-.9-.2-.73-.25-.59-.3-.45-.33-.34-.34-.25-.34-.16-.33-.1-.3-.04-.25-.02-.2.01-.13v-5.34l.05-.64.13-.54.21-.46.26-.38.3-.32.33-.24.35-.2.35-.14.33-.1.3-.06.26-.04.21-.02.13-.01h5.84l.69-.05.59-.14.5-.21.41-.28.33-.32.27-.35.2-.36.15-.36.1-.35.07-.32.04-.28.02-.21V6.07h2.09l.14.01zm-6.47 14.25l-.23.33-.08.41.08.41.23.33.33.23.41.08.41-.08.33-.23.23-.33.08-.41-.08-.41-.23-.33-.33-.23-.41-.08-.41.08z" fill="#519aba"/></svg>
<div class="ui" style="left:1394.6px;top:341px;font-size:23.4px;line-height:28px;color:#ccc;transform:scaleX(.982)">fib_py.py</div>
<div class="ui" style="left:1496px;top:342.6px;font-size:21px;line-height:28px;color:#8f8f8f;transform:scaleX(.944)">_code</div>
<div class="ui" style="left:1781.6px;top:341.4px;font-size:21.4px;line-height:28px;color:#b8996e;font-weight:bold;transform:scaleX(1.08)">M</div>
<div class="a" style="left:422px;top:194px;width:1330px;height:84.5px;background:#202020;border:1px solid #454545;border-radius:4px;box-shadow:0 1px 4px rgba(0,0,0,.25)"></div>
<div class="ln mono" style="top:201.6px"><span class="code" style="left:437px"><span style="color:#cccccc">fib_array = [</span><span style="color:#b5cea8">0</span><span style="color:#cccccc">, </span><span style="color:#b5cea8">1</span><span style="color:#cccccc">, </span><span style="color:#b5cea8">1</span><span style="color:#cccccc">, </span><span style="color:#b5cea8">2</span><span style="color:#cccccc">, </span><span style="color:#b5cea8">3</span><span style="color:#cccccc">, </span><span style="color:#b5cea8">5</span><span style="color:#cccccc">, </span><span style="color:#b5cea8">8</span><span style="color:#cccccc">, </span><span style="color:#b5cea8">13</span><span style="color:#cccccc">, </span><span style="color:#b5cea8">21</span><span style="color:#cccccc">, </span><span style="color:#b5cea8">34</span><span style="color:#cccccc">, </span><span style="color:#b5cea8">55</span><span style="color:#cccccc">, </span><span style="color:#b5cea8">89</span><span style="color:#cccccc">, </span><span style="color:#b5cea8">144</span><span style="color:#cccccc">, </span><span style="color:#b5cea8">233</span><span style="color:#cccccc">, </span><span style="color:#b5cea8">377</span><span style="color:#cccccc">, </span><span style="color:#b5cea8">610</span><span style="color:#cccccc">, </span><span style="color:#b5cea8">987</span><span style="color:#cccccc">, </span><span style="color:#b5cea8">1597</span><span style="color:#cccccc">,</span></span></div>
<div class="ln mono" style="top:235.6px"><span class="code" style="left:437px"><span style="color:#b5cea8">2584</span><span style="color:#cccccc">, </span><span style="color:#b5cea8">4181</span><span style="color:#cccccc">]</span></span></div>
</body></html>
